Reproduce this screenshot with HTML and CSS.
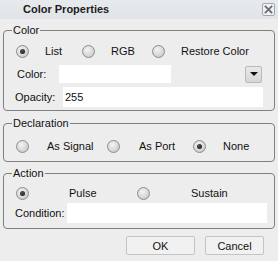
FILE: index.html
```html
<!DOCTYPE html>
<html lang="en">
<head>
    <meta charset="UTF-8">
    <title>Color Properties</title>
    <link rel="stylesheet" href="styles.css">
</head>
<body>
    <div class="dialog">
        <div class="titlebar">
            <span class="title">Color Properties</span>
            <span class="close">
                <svg width="9" height="9" viewBox="0 0 9 9">
                    <path d="M1.5 1.5 L7.5 7.5 M7.5 1.5 L1.5 7.5" stroke="#6e7073" stroke-width="1.8" stroke-linecap="square"/>
                </svg>
            </span>
        </div>

        <fieldset class="group group-color">
            <legend>Color</legend>
            <div class="choices">
                <label class="choice w66"><span class="radio checked"></span><span class="choice-text gap16">List</span></label>
                <label class="choice w70"><span class="radio"></span><span class="choice-text gap16">RGB</span></label>
                <label class="choice"><span class="radio"></span><span class="choice-text gap16">Restore Color</span></label>
            </div>
            <div class="field field-color">
                <span class="field-label lbl-color">Color:</span>
                <span class="textbox tb-color"></span>
                <span class="dropdown"><span class="arrow"></span></span>
            </div>
            <div class="field field-opacity">
                <span class="field-label lbl-opacity">Opacity:</span>
                <span class="textbox tb-opacity">255</span>
            </div>
        </fieldset>

        <fieldset class="group group-decl">
            <legend>Declaration</legend>
            <div class="choices">
                <label class="choice w91"><span class="radio"></span><span class="choice-text gap18">As Signal</span></label>
                <label class="choice w86"><span class="radio"></span><span class="choice-text gap19">As Port</span></label>
                <label class="choice"><span class="radio checked"></span><span class="choice-text gap17">None</span></label>
            </div>
        </fieldset>

        <fieldset class="group group-action">
            <legend>Action</legend>
            <div class="choices">
                <label class="choice w121"><span class="radio checked"></span><span class="choice-text gap40">Pulse</span></label>
                <label class="choice"><span class="radio"></span><span class="choice-text gap41">Sustain</span></label>
            </div>
            <div class="field field-cond">
                <span class="field-label lbl-cond">Condition:</span>
                <span class="textbox tb-cond"></span>
            </div>
        </fieldset>

        <div class="buttons">
            <button type="button" class="btn btn-ok">OK</button>
            <button type="button" class="btn btn-cancel">Cancel</button>
        </div>
    </div>
</body>
</html>
```

FILE: styles.css
```css
body {
    margin: 0;
    width: 278px;
    height: 261px;
    overflow: hidden;
    background: #ededed;
    font: 11px "Liberation Sans", Arial, sans-serif;
    color: #111;
}
.titlebar {
    height: 19px;
    display: flex;
    align-items: flex-start;
    background: linear-gradient(#e7eaed, #e0e4e8);
}
.title {
    margin: 3px 0 0 23px;
    font-weight: bold;
    line-height: 13px;
    color: #1c1c1c;
}
.close {
    margin: 3px 3px 0 auto;
    width: 13px;
    height: 13px;
    box-sizing: border-box;
    border: 1px solid #a4a7aa;
    border-radius: 2px;
    background: #eef0f2;
    display: flex;
    align-items: center;
    justify-content: center;
}
.group {
    margin: 0 3px;
    padding: 0;
    min-width: 0;
    border: 1px solid #7f7f7f;
    border-radius: 4px;
}
.group legend {
    margin-left: 8px;
    padding: 0 1px;
    line-height: 13px;
}
.group-color {
    margin-top: 5px;
    padding: 4px 0 3px;
}
.group-decl {
    margin-top: 6px;
    padding: 6px 0 5px;
}
.group-action {
    margin-top: 5px;
    padding: 3px 0 5px;
}
.choices {
    display: flex;
    align-items: center;
    height: 20px;
    padding-left: 12px;
}
.choice {
    display: flex;
    align-items: center;
}
.w66 { width: 66px; }
.w70 { width: 70px; }
.w91 { width: 91px; }
.w86 { width: 86px; }
.w121 { width: 121px; }
.gap16 { margin-left: 16px; }
.gap17 { margin-left: 17px; }
.gap18 { margin-left: 18px; }
.gap19 { margin-left: 19px; }
.gap40 { margin-left: 40px; }
.gap41 { margin-left: 41px; }
.radio {
    width: 13px;
    height: 13px;
    box-sizing: border-box;
    border: 1px solid #8c8c8c;
    border-radius: 50%;
    background: radial-gradient(circle at 40% 35%, #f4f4f4, #d0d0d0 70%, #c2c2c2);
    display: flex;
    align-items: center;
    justify-content: center;
}
.radio.checked::after {
    content: "";
    width: 5px;
    height: 5px;
    border-radius: 50%;
    background: radial-gradient(circle at 40% 35%, #555, #111);
}
.field {
    display: flex;
    align-items: center;
}
.field-color {
    margin-top: 4px;
    height: 18px;
    padding-left: 13px;
}
.field-opacity {
    margin-top: 4px;
    height: 20px;
    padding-left: 11px;
}
.field-cond {
    height: 20px;
    padding-left: 11px;
}
.lbl-color { width: 42px; }
.lbl-opacity { width: 48px; }
.lbl-cond { width: 52px; }
.textbox {
    height: 100%;
    background: #fff;
    line-height: 20px;
    padding-left: 2px;
    box-sizing: border-box;
}
.tb-color { width: 112px; }
.tb-opacity { width: 200px; }
.tb-cond { width: 200px; }
.dropdown {
    margin: 0 12px 0 auto;
    width: 17px;
    height: 17px;
    box-sizing: border-box;
    border: 1px solid #b9b9b9;
    border-radius: 2px;
    background: linear-gradient(#e8e8e8, #d6d6d6);
    display: flex;
    align-items: center;
    justify-content: center;
}
.arrow {
    width: 0;
    height: 0;
    border-left: 4px solid transparent;
    border-right: 4px solid transparent;
    border-top: 4px solid #111;
}
.buttons {
    display: flex;
    margin-top: 7px;
    padding-left: 126px;
    gap: 10px;
}
.btn {
    height: 19px;
    padding: 0;
    font: inherit;
    color: #111;
    background: #f1f1f1;
    border: 1px solid #c4c4c4;
    border-radius: 2px;
}
.btn-ok { width: 69px; }
.btn-cancel { width: 59px; }
```
